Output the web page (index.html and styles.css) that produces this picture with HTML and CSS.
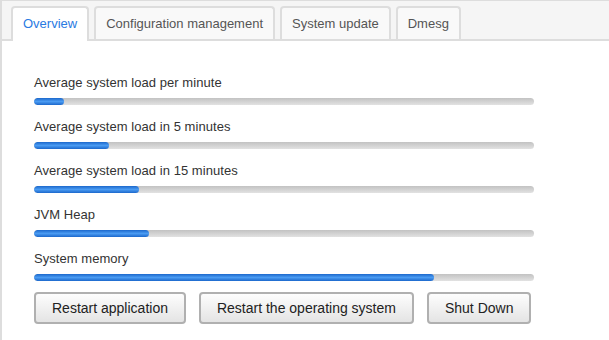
FILE: index.html
```html
<!DOCTYPE html>
<html lang="en">
<head>
    <meta charset="UTF-8">
    <meta name="viewport" content="width=device-width, initial-scale=1.0">
    <title>System</title>
    <link rel="stylesheet" href="styles.css">
</head>
<body>
    <div class="panel">
        <ul class="tabs">
            <li class="tab active">Overview</li>
            <li class="tab">Configuration management</li>
            <li class="tab">System update</li>
            <li class="tab">Dmesg</li>
        </ul>
        <div class="content">
            <div class="stat">
                <div class="stat-label">Average system load per minute</div>
                <div class="bar"><div class="bar-fill" style="width: 6%"></div></div>
            </div>
            <div class="stat">
                <div class="stat-label">Average system load in 5 minutes</div>
                <div class="bar"><div class="bar-fill" style="width: 15%"></div></div>
            </div>
            <div class="stat">
                <div class="stat-label">Average system load in 15 minutes</div>
                <div class="bar"><div class="bar-fill" style="width: 21%"></div></div>
            </div>
            <div class="stat">
                <div class="stat-label">JVM Heap</div>
                <div class="bar"><div class="bar-fill" style="width: 23%"></div></div>
            </div>
            <div class="stat">
                <div class="stat-label">System memory</div>
                <div class="bar"><div class="bar-fill" style="width: 80%"></div></div>
            </div>
            <div class="actions">
                <button type="button">Restart application</button>
                <button type="button">Restart the operating system</button>
                <button type="button">Shut Down</button>
            </div>
        </div>
    </div>
</body>
</html>
```

FILE: styles.css
```css
body {
    margin: 0;
    font-family: "Liberation Sans", Arial, sans-serif;
    font-size: 13px;
    color: #333;
    background: #fff;
}
.panel {
    border-top: 1px solid #ddd;
    border-left: 2px solid #ddd;
    min-height: 339px;
}
.tabs {
    list-style: none;
    margin: 0;
    padding: 5px 0 0 9px;
    display: flex;
    gap: 5px;
    background: #f5f5f5;
    border-bottom: 2px solid #ddd;
}
.tab {
    padding: 8px 10px 8px;
    line-height: 15px;
    border: 2px solid #ddd;
    border-bottom: none;
    border-radius: 4px 4px 0 0;
    background: #f9f9f9;
    color: #555;
}
.tab.active {
    background: #fff;
    color: #2a7ae2;
    margin-bottom: -2px;
    padding-bottom: 10px;
}
.content {
    padding: 34px 0 0 32px;
    width: 500px;
}
.stat {
    margin-bottom: 14px;
}
.stat:nth-last-child(2) {
    margin-bottom: 11px;
}
.stat-label {
    line-height: 16px;
    margin-bottom: 7px;
    letter-spacing: 0.05px;
}
.bar {
    height: 7px;
    border-radius: 4px;
    background: linear-gradient(to bottom, #c2c2c2, #e2e2e2);
    overflow: hidden;
}
.bar-fill {
    height: 100%;
    border-radius: 4px;
    background: linear-gradient(to bottom, #1c68cc, #4a9bf2 50%, #1c68cc);
}
.actions {
    display: flex;
    gap: 13px;
}
button {
    margin: 0;
    height: 32px;
    padding: 0 16px;
    font-family: inherit;
    font-size: 14px;
    color: #222;
    border: 2px solid #b0b0b0;
    border-radius: 4px;
    background: linear-gradient(to bottom, #fdfdfd, #e4e4e4);
    cursor: pointer;
}
```
